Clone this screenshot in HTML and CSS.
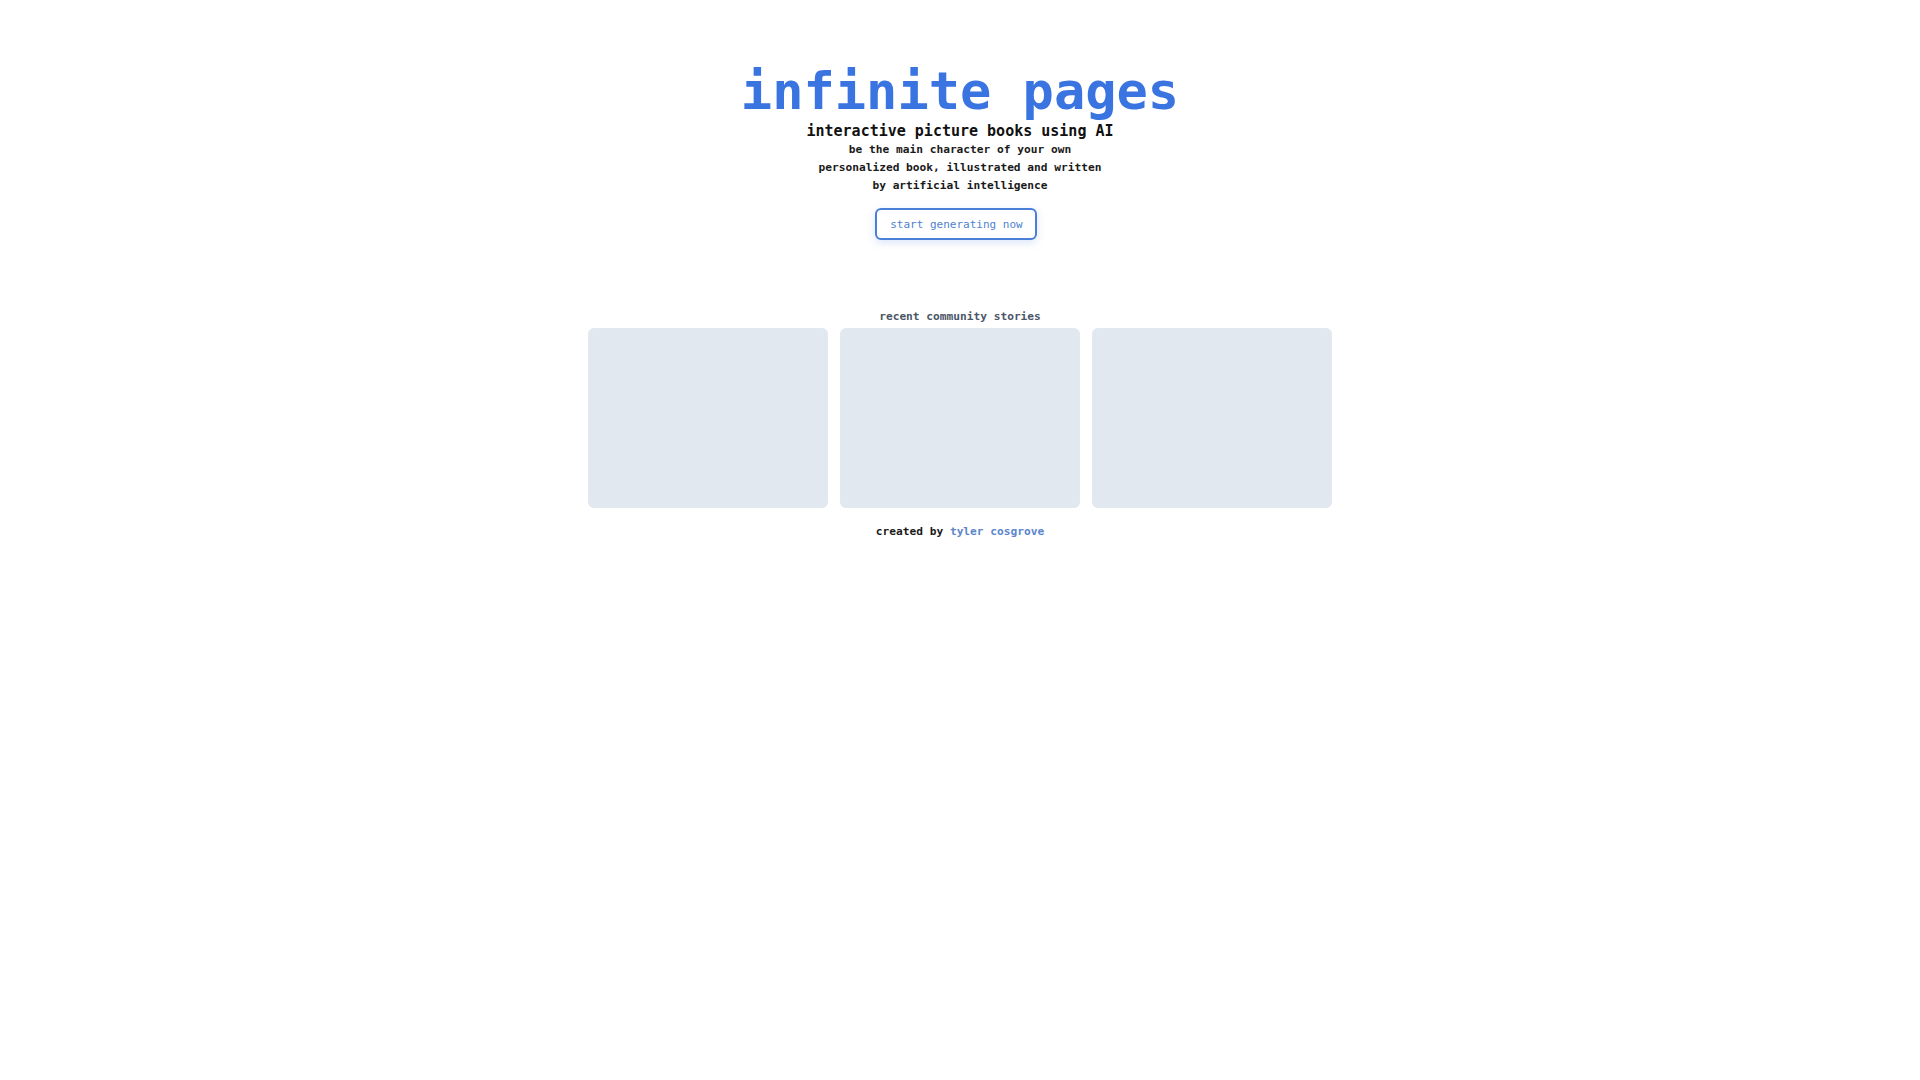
FILE: index.html
```html
<!DOCTYPE html>
<html lang="en">
<head>
  <meta charset="UTF-8">
  <meta name="viewport" content="width=device-width, initial-scale=1.0">
  <title>infinite pages</title>
  <link rel="stylesheet" href="styles.css">
</head>
<body>

  <div class="page">
    <div class="hero">
      <h1 class="title">infinite pages</h1>
      <div class="subtitle">interactive picture books using AI</div>
      <p class="blurb">
        be the main character of your own<br>
        personalized book, illustrated and written<br>
        by artificial intelligence
      </p>
      <button class="start-button">start generating now</button>
    </div>

    <div class="community">
      <div class="community-label">recent community stories</div>
      <div class="story-grid">
        <div class="story-card"></div>
        <div class="story-card"></div>
        <div class="story-card"></div>
      </div>
    </div>

    <div class="credits">
      created by <a href="#" class="credits-link">tyler cosgrove</a>
    </div>
  </div>

</body>
</html>
```

FILE: styles.css
```css
* {
  margin: 0;
  padding: 0;
  box-sizing: border-box;
}

body {
  font-family: "DejaVu Sans Mono", "Liberation Mono", monospace;
  background: #ffffff;
  color: #111;
}

.page {
  display: flex;
  flex-direction: column;
  align-items: center;
  padding-top: 60px;
}

.hero {
  display: flex;
  flex-direction: column;
  align-items: center;
  text-align: center;
}

.title {
  font-size: 52px;
  line-height: 62px;
  font-weight: bold;
  color: #3a74e0;
}

.subtitle {
  font-size: 15px;
  font-weight: bold;
  line-height: 18px;
}

.blurb {
  font-size: 11.2px;
  font-weight: bold;
  line-height: 18px;
  margin-top: 1px;
  color: #1a1a1a;
}

.start-button {
  margin-top: 13px;
  margin-right: 7px;
  width: 162px;
  height: 32px;
  font-family: inherit;
  font-size: 11px;
  color: #4f82cf;
  background: #fff;
  border: 2px solid #4a7fd8;
  border-radius: 6px;
  box-shadow: 0 3px 8px rgba(59, 116, 224, 0.18);
  cursor: pointer;
}

.community {
  display: flex;
  flex-direction: column;
  align-items: center;
  margin-top: 69px;
}

.community-label {
  font-size: 11.2px;
  font-weight: bold;
  line-height: 16px;
  color: #4b5667;
}

.story-grid {
  display: grid;
  grid-template-columns: repeat(3, 240px);
  gap: 12px;
  margin-top: 3px;
}

.story-card {
  height: 180px;
  background: #e2e8f0;
  border-radius: 6px;
}

.credits {
  margin-top: 16px;
  font-size: 11.2px;
  font-weight: bold;
  line-height: 16px;
  color: #1a1a1a;
}

.credits-link {
  color: #5b86cc;
  text-decoration: none;
}
```
